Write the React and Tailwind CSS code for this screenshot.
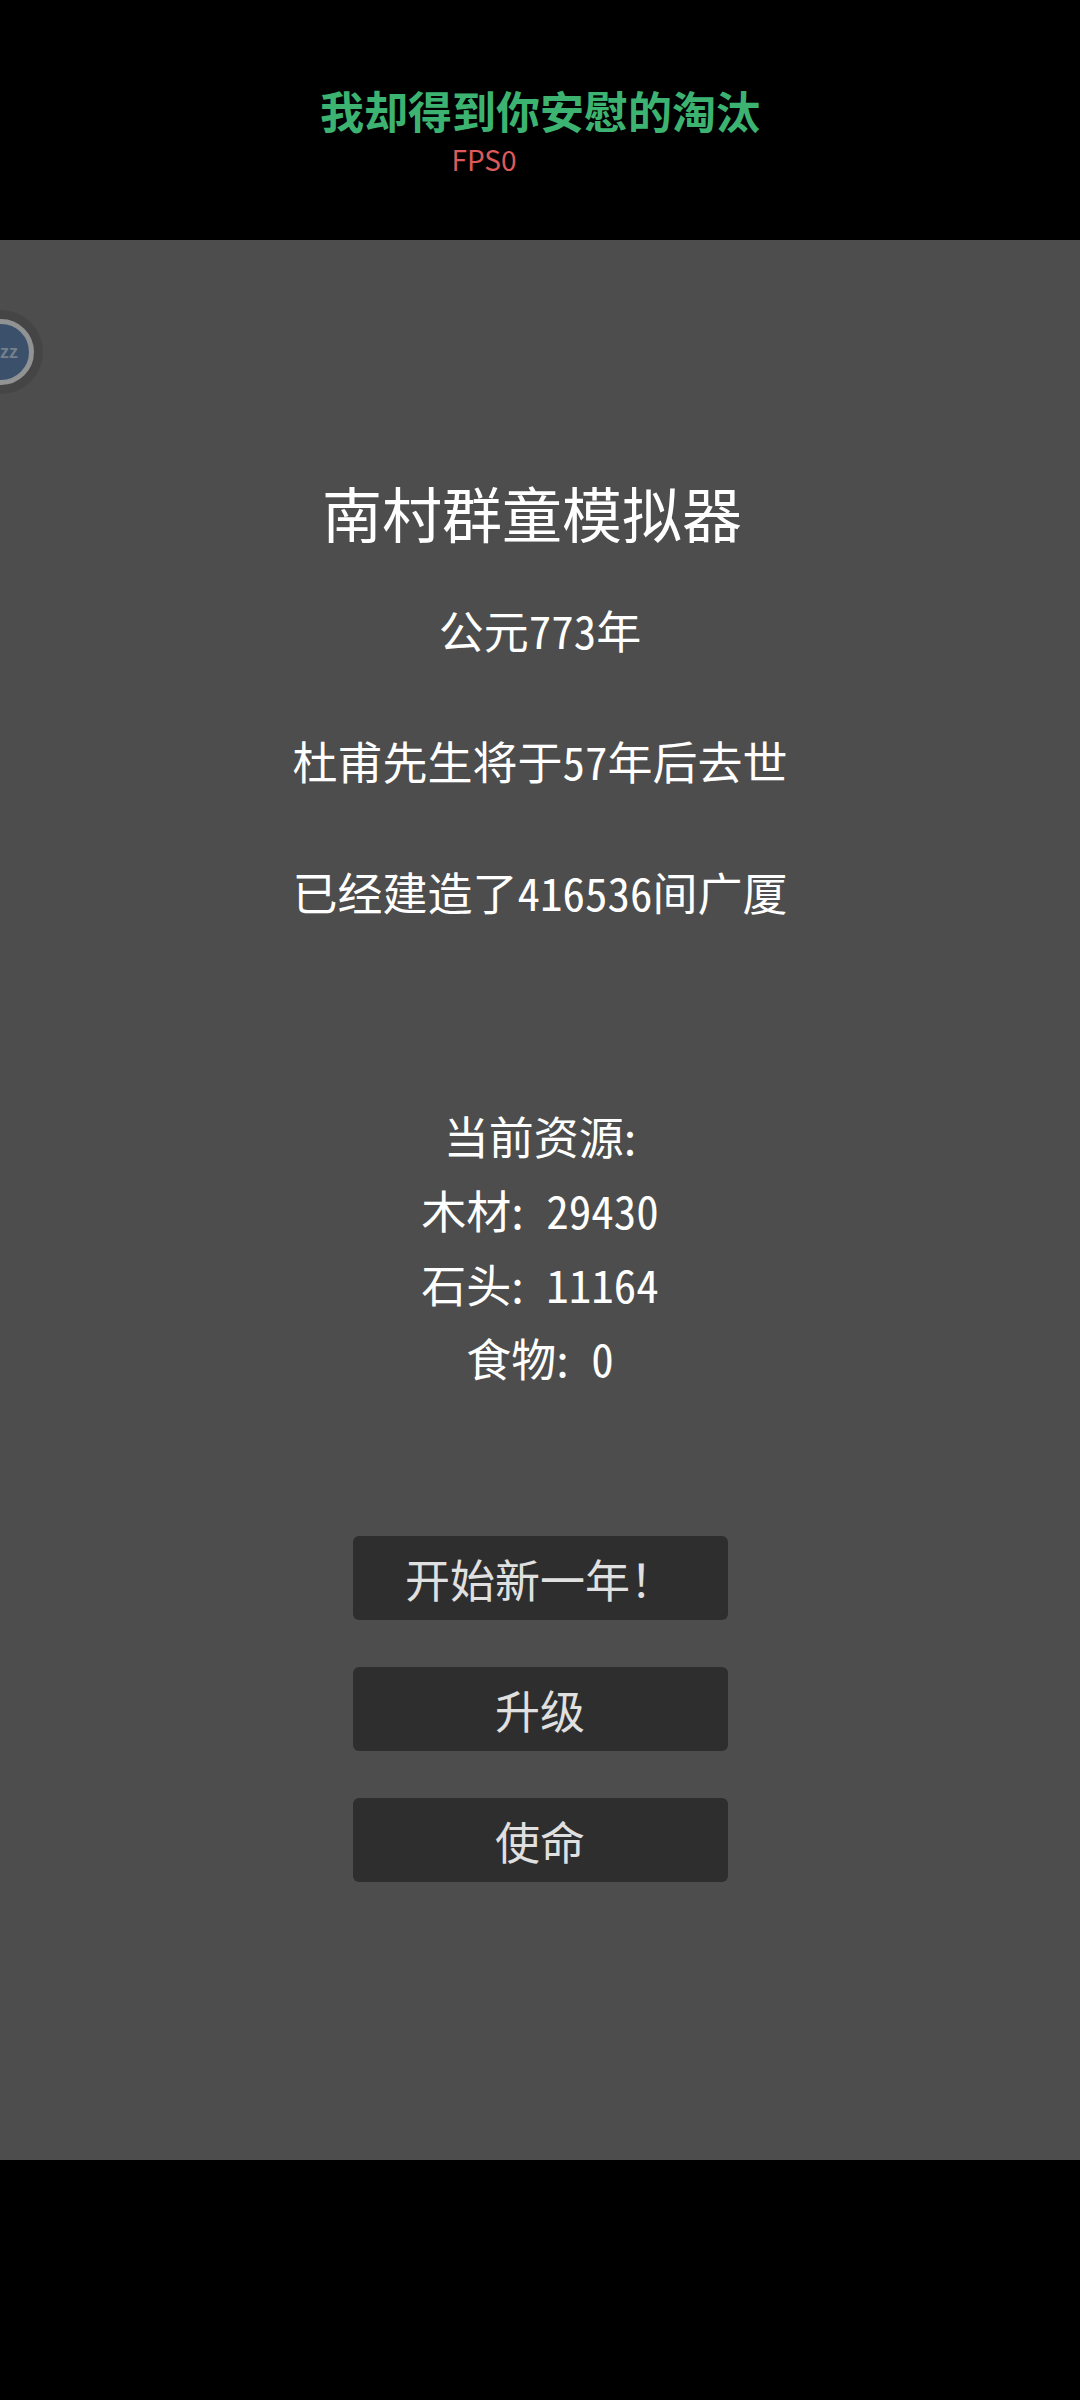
const resources = [
  { name: '木材', amount: 29430 },
  { name: '石头', amount: 11164 },
  { name: '食物', amount: 0 },
]

const actions = ['开始新一年！', '升级', '使命']

// half-width figures, two digits to one Chinese character
function Num({ children }) {
  return <span className="[font-feature-settings:'hwid']">{children}</span>
}

function Header() {
  return (
    <header className="h-60 bg-black text-center pt-20">
      <p className="text-[44px] leading-[60px] font-bold text-[#3cb371]">我却得到你安慰的淘汰</p>
      <p className="text-[28px] leading-[38px] pr-28 text-[#dc5a5a]">FPS0</p>
    </header>
  )
}

function FloatingBall() {
  return (
    <button
      type="button"
      aria-label="zz"
      className="absolute top-[70px] -left-[41px] size-[84px] rounded-full bg-[#454545] flex items-center justify-center"
    >
      <span className="size-[66px] rounded-full border-5 border-[#919293] bg-[#3b516b] flex items-center justify-end pr-[11px] font-['Liberation_Sans',sans-serif] text-[18px] leading-none font-bold text-[#75808c]">
        zz
      </span>
    </button>
  )
}

export default function App() {
  return (
    <div className="min-h-screen flex flex-col bg-black font-['Noto_Sans_CJK_SC',sans-serif]">
      <Header />
      <main className="relative flex-1 overflow-hidden bg-[#4d4d4d] text-white text-center text-[45px] pt-[232px] pb-[277px]">
        <FloatingBall />
        <h1 className="text-[60px] leading-[80px] pr-4">南村群童模拟器</h1>
        <div className="mt-[46px] flex flex-col gap-[68px] leading-[63px]">
          <p>公元<Num>773</Num>年</p>
          <p>杜甫先生将于<Num>57</Num>年后去世</p>
          <p>已经建造了<Num>416536</Num>间广厦</p>
        </div>
        <section className="mt-[176px] leading-[74px]">
          <h2>当前资源:</h2>
          {resources.map((r) => (
            <p key={r.name}>
              {r.name}:<Num> {r.amount}</Num>
            </p>
          ))}
        </section>
        <div className="mt-[141px] flex flex-col items-center gap-[47px]">
          {actions.map((label) => (
            <button
              key={label}
              type="button"
              className="w-[375px] h-[84px] rounded-md bg-[#2e2e2e] text-[#e0e0e0] leading-[63px]"
            >
              {label}
            </button>
          ))}
        </div>
      </main>
      <footer className="h-60 bg-black"></footer>
    </div>
  )
}
